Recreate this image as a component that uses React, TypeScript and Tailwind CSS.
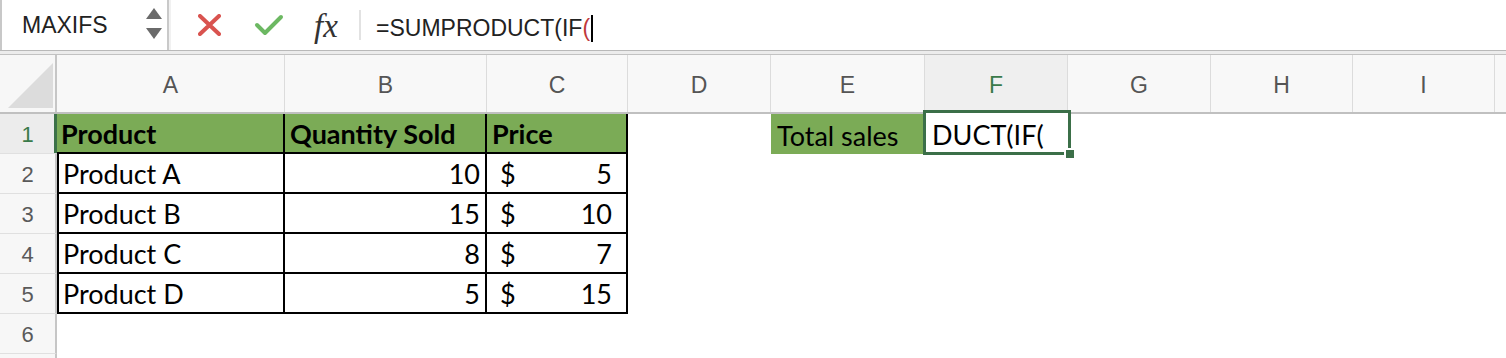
import React from "react";

const cols = [
  { l: "A", w: 228 },
  { l: "B", w: 202 },
  { l: "C", w: 141 },
  { l: "D", w: 143 },
  { l: "E", w: 154 },
  { l: "F", w: 143 },
  { l: "G", w: 143 },
  { l: "H", w: 142 },
  { l: "I", w: 142 },
  { l: "", w: 60 },
];

const data = [
  ["Product A", "10", "5"],
  ["Product B", "15", "10"],
  ["Product C", "8", "7"],
  ["Product D", "5", "15"],
];

const cellFont = { fontFamily: "Lato, 'Open Sans', sans-serif" };
const uiFont = { fontFamily: "'Liberation Sans', Arial, sans-serif" };

function RowHeader({ n, active }: { n?: number; active?: boolean }) {
  return (
    <div
      className={`w-[57px] shrink-0 h-full flex items-center justify-center border-b border-[#e0e0e0] text-[22px] relative ${
        active ? "text-[#3a7a4a] bg-[#ececec]" : "text-[#5a5a5a] bg-[#f7f7f7]"
      } border-r-2 border-r-[#c6c6c6]`}
      style={uiFont}
    >
      <span className="pt-[2px]">{n}</span>
      {active && <div className="absolute right-[-2px] top-0 bottom-0 w-[3px] bg-[#3c7249]" />}
    </div>
  );
}

const cellBase = "shrink-0 h-full flex items-end pb-[5px] text-[27px] leading-none text-black";

export default function App() {
  return (
    <div className="w-[1506px] h-[358px] bg-white overflow-hidden relative">
      {/* Formula bar */}
      <div className="flex h-[51px] border-b border-[#b9b9b9] bg-white">
        <div className="w-[167px] shrink-0 flex items-center border-l-2 border-[#c8c8c8] relative">
          <span className="ml-[20px] text-[23px] text-[#222] pt-[1px]" style={uiFont}>
            MAXIFS
          </span>
          <div className="absolute left-[144px] top-[8px] flex flex-col gap-[9px]">
            <svg width="16" height="11" viewBox="0 0 16 11">
              <polygon points="8,0 16,11 0,11" fill="#6a6a6a" />
            </svg>
            <svg width="16" height="11" viewBox="0 0 16 11">
              <polygon points="0,0 16,0 8,11" fill="#6a6a6a" />
            </svg>
          </div>
        </div>
        <div className="w-[4px] shrink-0 border-l-2 border-[#c9c9c9] bg-[#f1f1f1]" />
        <div className="flex items-center flex-1 relative">
          <svg className="absolute left-[27px] top-[14px]" width="23" height="22" viewBox="0 0 23 22">
            <path d="M2 2 L21 20 M21 2 L2 20" stroke="#d9534f" strokeWidth="4" strokeLinecap="round" />
          </svg>
          <svg className="absolute left-[83px] top-[14px]" width="30" height="22" viewBox="0 0 30 22">
            <path d="M3 11 L11 19 L27 3" stroke="#6cb862" strokeWidth="4" strokeLinecap="round" strokeLinejoin="round" fill="none" />
          </svg>
          <span
            className="absolute left-[143px] top-[2px] text-[33px] italic text-[#333]"
            style={{ fontFamily: "'Liberation Serif', 'DejaVu Serif', serif" }}
          >
            fx
          </span>
          <div className="absolute left-[188px] top-[10px] w-[2px] h-[30px] bg-[#e2e2e2]" />
          <span className="absolute left-[205px] top-[11px] text-[23px] text-[#222] flex items-center" style={uiFont}>
            =SUMPRODUCT(IF<span className="text-[#c0393b]">(</span>
            <span className="inline-block w-[2px] h-[27px] bg-black ml-[1px]" />
          </span>
        </div>
      </div>
      <div className="h-[4px] bg-[#ececec] border-b border-[#c2c2c2]" />

      {/* Column headers */}
      <div className="flex h-[59px] border-b-2 border-[#c0c0c0]">
        <div className="w-[57px] shrink-0 h-full bg-[#f7f7f7] border-r-2 border-[#c6c6c6] relative">
          <svg className="absolute left-[8px] top-[8px]" width="45" height="45" viewBox="0 0 45 45">
            <polygon points="45,0 45,45 0,45" fill="#dcdcdc" />
          </svg>
        </div>
        {cols.map((c, i) => (
          <div
            key={i}
            className={`shrink-0 h-full flex items-center justify-center border-r border-[#dcdcdc] text-[23px] ${
              c.l === "F" ? "bg-[#efefef] text-[#3a7a4a]" : "bg-[#f8f8f8] text-[#555]"
            }`}
            style={{ width: c.w, ...uiFont }}
          >
            <span className="pt-[4px]">{c.l}</span>
          </div>
        ))}
      </div>

      {/* Row 1 */}
      <div className="flex h-[40px]">
        <RowHeader n={1} active />
        <div className={`${cellBase} w-[228px] bg-[#7bab56] border-r-2 border-b-2 border-black pl-[4px] font-bold`} style={cellFont}>
          Product
        </div>
        <div className={`${cellBase} w-[202px] bg-[#7bab56] border-r-2 border-b-2 border-black pl-[5px] font-bold`} style={cellFont}>
          Quantity Sold
        </div>
        <div className={`${cellBase} w-[141px] bg-[#7bab56] border-r-2 border-b-2 border-black pl-[5px] font-bold`} style={cellFont}>
          Price
        </div>
        <div className="w-[143px] shrink-0 h-full" />
        <div className={`${cellBase} w-[154px] bg-[#7bab56] pl-[6px]`} style={cellFont}>
          Total sales
        </div>
        <div className="w-[143px] shrink-0 h-full relative">
          <div
            className="absolute left-[-2px] top-[-4px] w-[148px] h-[45px] border-[3px] border-[#3b6f48] flex items-end pl-[6px] pb-[4px] text-[27px] leading-none text-black bg-white"
            style={cellFont}
          >
            DUCT(IF(
          </div>
          <div className="absolute left-[139px] top-[34px] w-[10px] h-[10px] bg-[#3b6f48] border-l-2 border-t-2 border-white" />
        </div>
      </div>

      {/* Rows 2-5 */}
      {data.map((r, i) => (
        <div key={i} className="flex h-[40px]">
          <RowHeader n={i + 2} />
          <div className={`${cellBase} w-[228px] border-l-2 border-r-2 border-b-2 border-black pl-[4px]`} style={cellFont}>
            {r[0]}
          </div>
          <div className={`${cellBase} w-[202px] border-r-2 border-b-2 border-black justify-end pr-[5px]`} style={cellFont}>
            {r[1]}
          </div>
          <div className={`${cellBase} w-[141px] border-r-2 border-b-2 border-black justify-between pl-[13px] pr-[14px]`} style={cellFont}>
            <span>$</span>
            <span>{r[2]}</span>
          </div>
        </div>
      ))}

      {/* Row 6 */}
      <div className="flex h-[40px]">
        <RowHeader n={6} />
      </div>
      <div className="flex h-[40px]">
        <RowHeader />
      </div>
    </div>
  );
}
